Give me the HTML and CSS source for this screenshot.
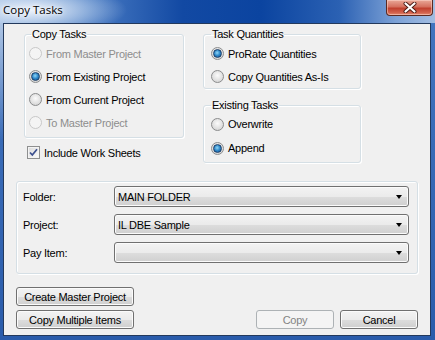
FILE: index.html
```html
<!DOCTYPE html>
<html lang="en">
<head>
  <meta charset="UTF-8">
  <title>Copy Tasks</title>
  <link rel="stylesheet" href="styles.css">
</head>
<body>
  <div class="window">
    <div class="titlebar">
      <span class="title">Copy Tasks</span>
      <span class="close">
        <svg width="14" height="11" viewBox="0 0 14 11">
          <path d="M2.5 1.5 L11.5 9.5 M11.5 1.5 L2.5 9.5" stroke="#4a1a14" stroke-width="4" stroke-linecap="round"/>
          <path d="M2.5 1.5 L11.5 9.5 M11.5 1.5 L2.5 9.5" stroke="#fff" stroke-width="2.2" stroke-linecap="round"/>
        </svg>
      </span>
    </div>

    <div class="client">
      <div class="top">
        <div class="col-left">
          <fieldset class="group copy">
            <legend>Copy Tasks</legend>
            <div class="opt off"><span class="radio"></span>From Master Project</div>
            <div class="opt on"><span class="radio"></span>From Existing Project</div>
            <div class="opt"><span class="radio"></span>From Current Project</div>
            <div class="opt off"><span class="radio"></span>To Master Project</div>
          </fieldset>
          <div class="check">
            <span class="box">
              <svg width="11" height="11" viewBox="0 0 11 11">
                <path d="M2 5.5 L4.3 8 L9 2.2" fill="none" stroke="#3b4f8e" stroke-width="1.7"/>
              </svg>
            </span>
            Include Work Sheets
          </div>
        </div>

        <div class="col-right">
          <fieldset class="group side qty">
            <legend>Task Quantities</legend>
            <div class="opt on"><span class="radio"></span>ProRate Quantities</div>
            <div class="opt"><span class="radio"></span>Copy Quantities As-Is</div>
          </fieldset>
          <fieldset class="group side existing">
            <legend>Existing Tasks</legend>
            <div class="opt"><span class="radio"></span>Overwrite</div>
            <div class="opt on"><span class="radio"></span>Append</div>
          </fieldset>
        </div>
      </div>

      <fieldset class="group select">
        <div class="field">
          <span class="field-label">Folder:</span>
          <div class="combo"><span class="value">MAIN FOLDER</span><span class="arrow"></span></div>
        </div>
        <div class="field">
          <span class="field-label">Project:</span>
          <div class="combo"><span class="value">IL DBE Sample</span><span class="arrow"></span></div>
        </div>
        <div class="field">
          <span class="field-label">Pay Item:</span>
          <div class="combo"><span class="value"></span><span class="arrow"></span></div>
        </div>
      </fieldset>

      <div class="actions">
        <button class="btn">Create Master Project</button>
        <div class="actions-row">
          <button class="btn">Copy Multiple Items</button>
          <button class="btn btn-small push" disabled>Copy</button>
          <button class="btn btn-small">Cancel</button>
        </div>
      </div>
    </div>
  </div>
</body>
</html>
```

FILE: styles.css
```css
* {
  box-sizing: border-box;
}
body {
  margin: 0;
  font-family: "Liberation Sans", Arial, sans-serif;
  font-size: 11px;
  letter-spacing: -0.25px;
  color: #000;
}
.window {
  width: 435px;
  height: 340px;
  display: flex;
  flex-direction: column;
  background:
    radial-gradient(ellipse 90px 140px at 0 0, #c3d5ec, rgba(195, 213, 236, 0) 100%),
    linear-gradient(180deg, #4476c0, #2a5cab);
}
.titlebar {
  height: 23px;
  display: flex;
  align-items: flex-start;
  background:
    radial-gradient(ellipse 95px 26px at 32px 10px, rgba(240, 245, 252, 0.95), rgba(205, 222, 242, 0.55) 55%, rgba(205, 222, 242, 0) 100%),
    linear-gradient(90deg, #9ab8e0 0%, #4a7cc4 20%, #1249a3 42%, #0b44a0 60%, #2b61b3 78%, #7ca1d6 91%, #a2bde2 100%);
}
.title {
  font-family: "Open Sans", "Liberation Sans", sans-serif;
  font-size: 11.5px;
  letter-spacing: 0;
  line-height: 20px;
  padding-left: 3px;
  text-shadow: 0 0 6px #fff, 0 0 3px #fff;
}
.close {
  margin-left: auto;
  margin-right: 2px;
  width: 47px;
  height: 16px;
  display: flex;
  align-items: center;
  justify-content: center;
  border: 1px solid #5a2a22;
  border-top: none;
  border-radius: 0 0 4px 4px;
  background: linear-gradient(180deg, #e9a898 0%, #d5705e 45%, #c0402e 55%, #d2634e 85%, #e58d72 100%);
  box-shadow: inset 0 0 0 1px rgba(255, 220, 210, 0.5);
}
.client {
  flex: 1;
  margin: 0 4px 4px 3px;
  border: 1px solid #23395c;
  background: #f0f0f0;
  padding: 4px 12px 0;
}
.top {
  display: flex;
  gap: 19px;
  padding-left: 8px;
}
.col-left {
  width: 160px;
}
.col-right {
  width: 158px;
  display: flex;
  flex-direction: column;
}
.group {
  margin: 0;
  border: 1px solid #d5dfe5;
  border-radius: 3px;
  box-shadow: inset 1px 1px 0 #fff, 1px 1px 0 #fff;
  padding: 1px 4px 3px;
}
.group legend {
  margin-left: 2px;
  padding: 0 1px;
  line-height: 13px;
}
.side {
  padding-left: 7px;
}
.side legend {
  margin-left: 0;
}
.qty {
  padding-bottom: 0;
}
.existing {
  margin-top: 10px;
  padding-top: 0;
  padding-bottom: 2px;
}
.opt {
  display: flex;
  align-items: center;
  gap: 4px;
  height: 23px;
}
.existing .opt {
  height: 24px;
}
.radio {
  width: 13px;
  height: 13px;
  flex: none;
  display: flex;
  align-items: center;
  justify-content: center;
  border: 1px solid #8b8c8d;
  border-radius: 50%;
  background: radial-gradient(circle at 50% 40%, #fbfbfb 0, #e6e6e6 45%, #cdcdcd 100%);
}
.on .radio::after {
  content: "";
  width: 7px;
  height: 7px;
  border-radius: 50%;
  border: 1px solid #1d3f68;
  background: radial-gradient(circle at 45% 40%, #8fd6f6 0, #2c86c8 50%, #16508c 100%);
}
.off {
  color: #8d8d8d;
}
.off .radio {
  border-color: #c8c8c8;
  background: #f4f4f4;
}
.check {
  margin-top: 8px;
  margin-left: 3px;
  height: 13px;
  display: flex;
  align-items: center;
  gap: 4px;
}
.box {
  width: 13px;
  height: 13px;
  display: flex;
  border: 1px solid #8e8f8f;
  background: linear-gradient(135deg, #d9d9d9, #fdfdfd);
  box-shadow: inset 0 0 0 1px #f3f3f3;
}
.select {
  margin-top: 18px;
  padding: 4px 8px 10px 6px;
  display: flex;
  flex-direction: column;
  gap: 7px;
}
.field {
  display: flex;
  align-items: center;
}
.field-label {
  width: 91px;
}
.combo {
  flex: 1;
  height: 21px;
  display: flex;
  align-items: center;
  padding: 0 6px 0 3px;
  border: 1px solid #707070;
  border-radius: 3px;
  background: linear-gradient(180deg, #f3f3f3 0%, #ebebeb 50%, #dddddd 51%, #cfcfcf 100%);
  box-shadow: inset 0 0 0 1px #fbfbfb;
}
.combo .value {
  flex: 1;
}
.arrow {
  width: 0;
  height: 0;
  border-left: 3.5px solid transparent;
  border-right: 3.5px solid transparent;
  border-top: 4px solid #000;
}
.actions {
  margin-top: 13px;
  display: flex;
  flex-direction: column;
  align-items: flex-start;
  gap: 4px;
}
.actions-row {
  width: 100%;
  display: flex;
  gap: 6px;
}
.btn {
  width: 118px;
  height: 19px;
  padding: 0;
  font-family: inherit;
  font-size: 11px;
  letter-spacing: inherit;
  color: #000;
  border: 1px solid #707070;
  border-radius: 3px;
  background: linear-gradient(180deg, #f3f3f3 0%, #ebebeb 50%, #dddddd 51%, #cfcfcf 100%);
  box-shadow: inset 0 0 0 1px #fbfbfb;
}
.btn-small {
  width: 78px;
}
.push {
  margin-left: auto;
}
.btn:disabled {
  color: #838383;
  border-color: #adb2b5;
  background: #f4f4f4;
  box-shadow: none;
}
```
